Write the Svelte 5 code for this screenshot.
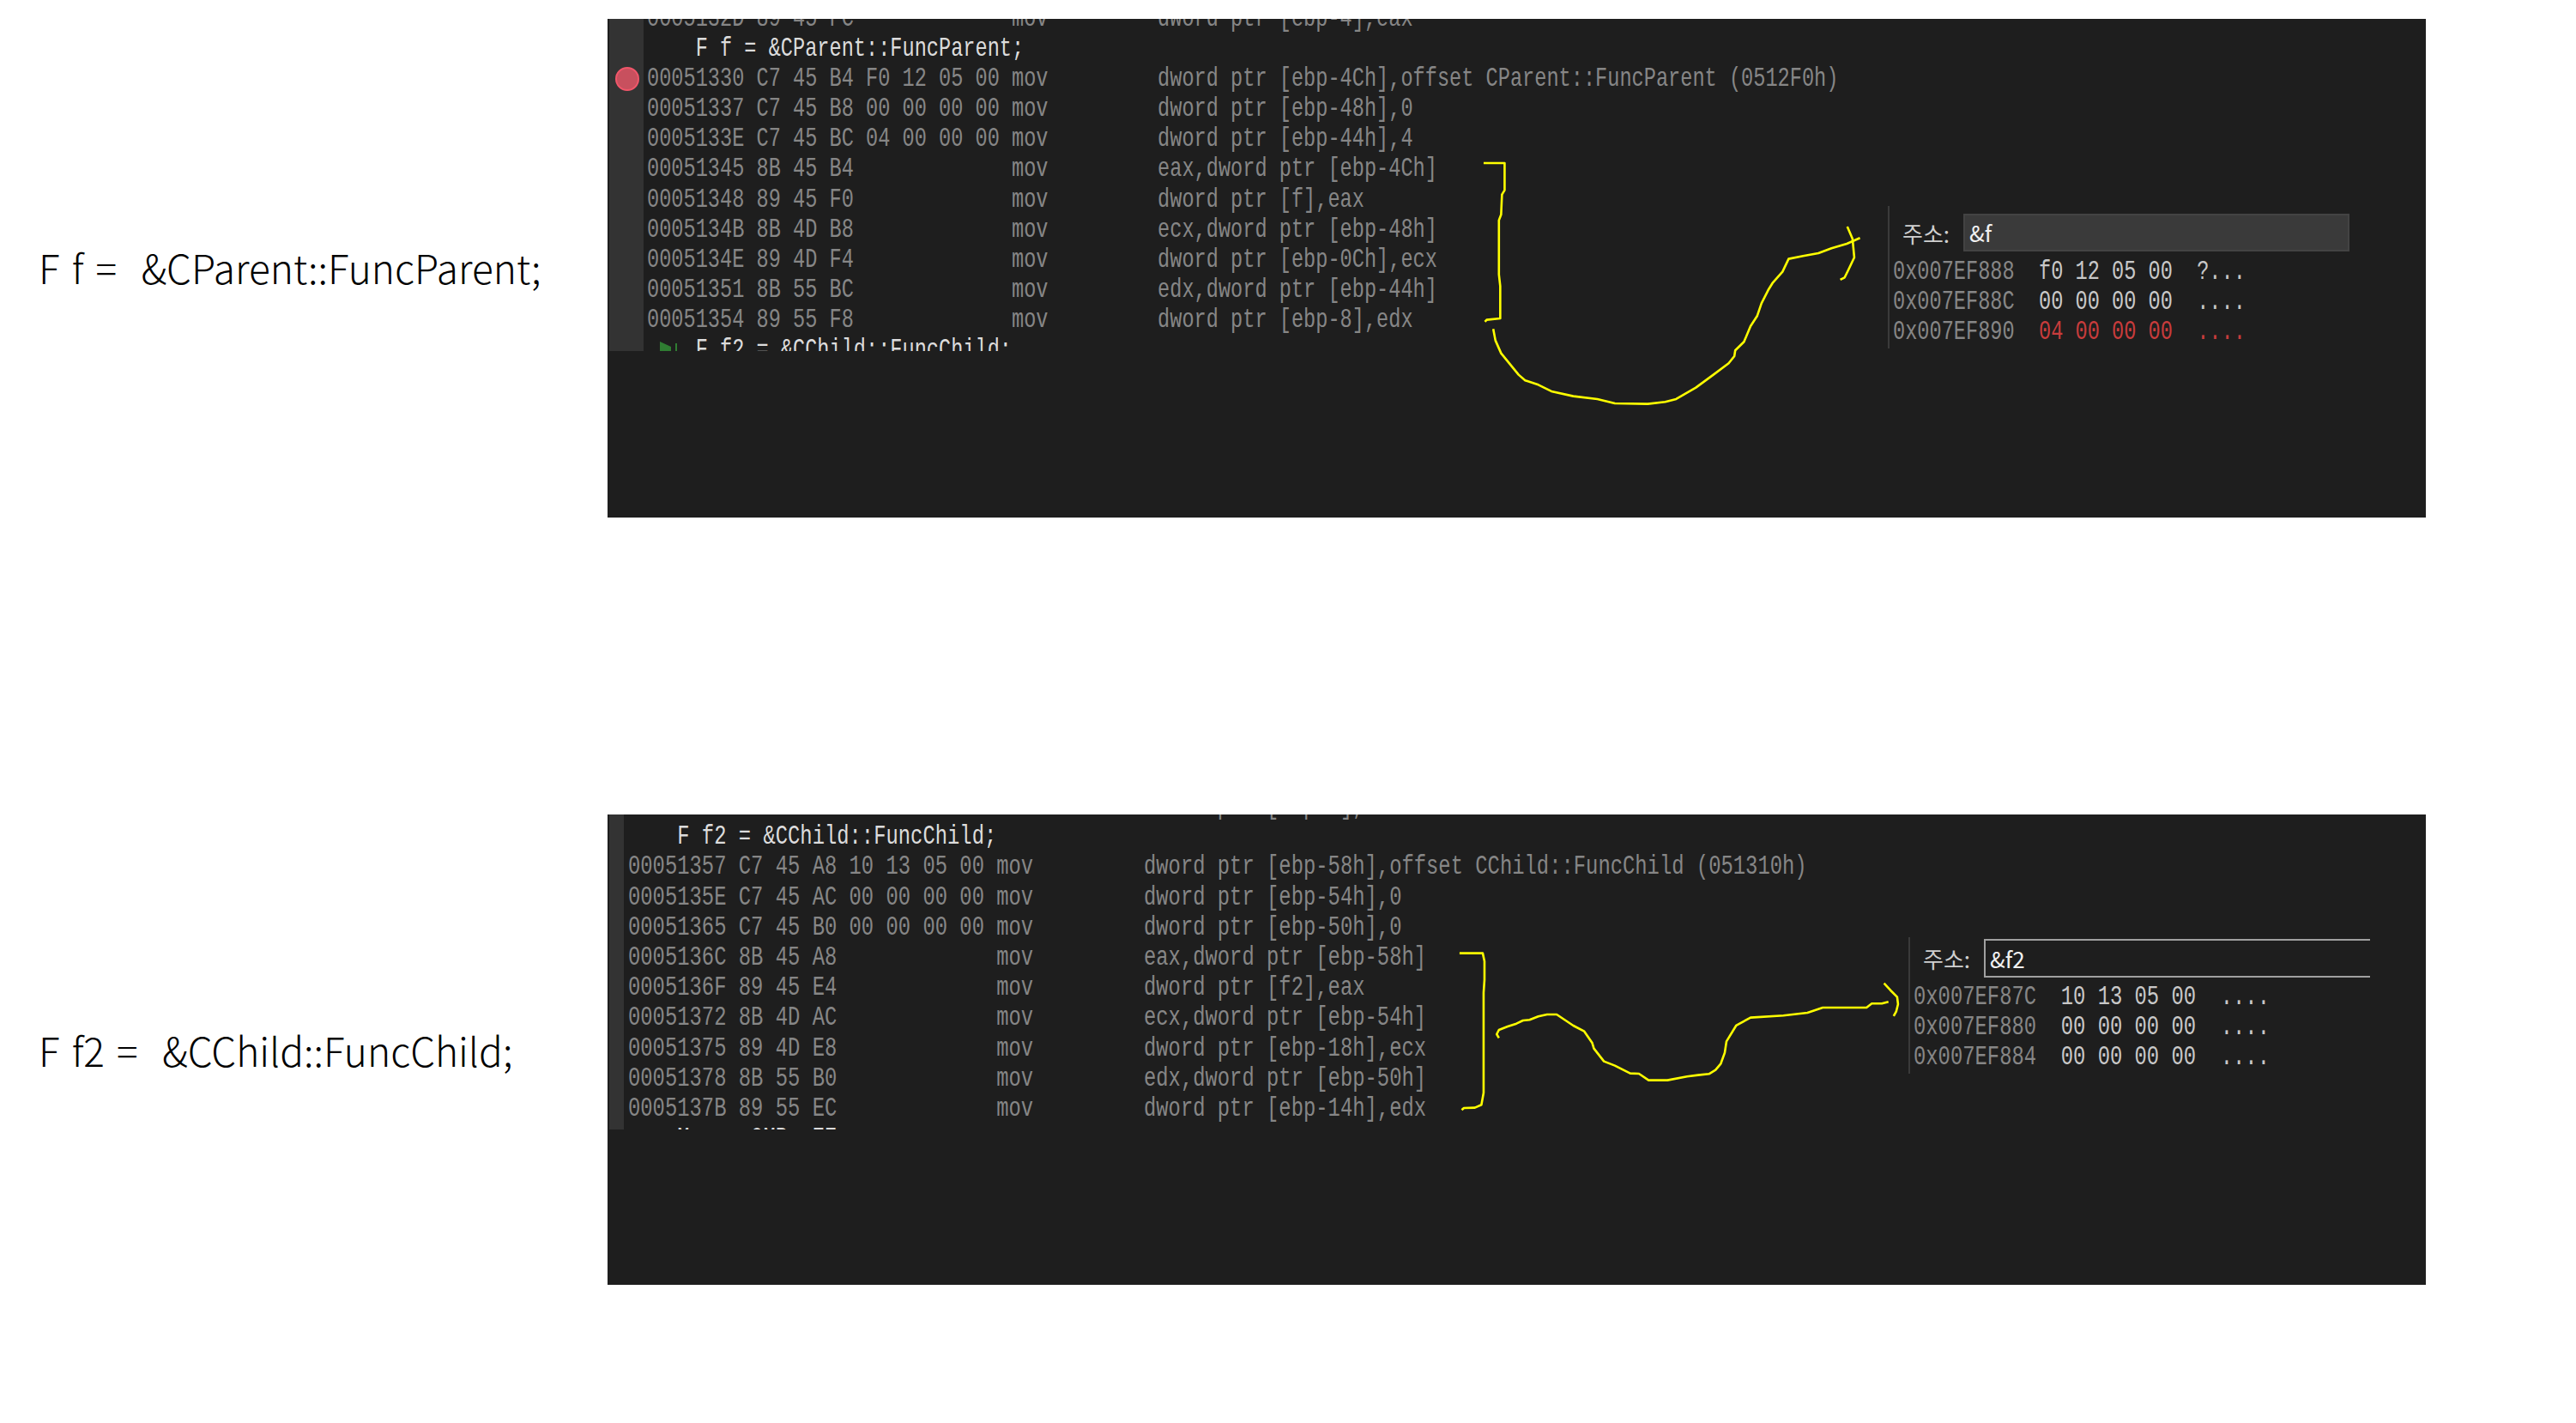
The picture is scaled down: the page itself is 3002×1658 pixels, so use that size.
<script>
  const firstRows = [
    { text: '0005132D 89 45 FC             mov         dword ptr [ebp-4],eax' },
    { text: '    F f = &CParent::FuncParent;', code: true },
    { text: '00051330 C7 45 B4 F0 12 05 00 mov         dword ptr [ebp-4Ch],offset CParent::FuncParent (0512F0h)' },
    { text: '00051337 C7 45 B8 00 00 00 00 mov         dword ptr [ebp-48h],0' },
    { text: '0005133E C7 45 BC 04 00 00 00 mov         dword ptr [ebp-44h],4' },
    { text: '00051345 8B 45 B4             mov         eax,dword ptr [ebp-4Ch]' },
    { text: '00051348 89 45 F0             mov         dword ptr [f],eax' },
    { text: '0005134B 8B 4D B8             mov         ecx,dword ptr [ebp-48h]' },
    { text: '0005134E 89 4D F4             mov         dword ptr [ebp-0Ch],ecx' },
    { text: '00051351 8B 55 BC             mov         edx,dword ptr [ebp-44h]' },
    { text: '00051354 89 55 F8             mov         dword ptr [ebp-8],edx' },
    { text: '    F f2 = &CChild::FuncChild;', code: true },
  ];

  const secondRows = [
    { text: '00051354 89 55 F8             mov         dword ptr [ebp-8],edx' },
    { text: '    F f2 = &CChild::FuncChild;', code: true },
    { text: '00051357 C7 45 A8 10 13 05 00 mov         dword ptr [ebp-58h],offset CChild::FuncChild (051310h)' },
    { text: '0005135E C7 45 AC 00 00 00 00 mov         dword ptr [ebp-54h],0' },
    { text: '00051365 C7 45 B0 00 00 00 00 mov         dword ptr [ebp-50h],0' },
    { text: '0005136C 8B 45 A8             mov         eax,dword ptr [ebp-58h]' },
    { text: '0005136F 89 45 E4             mov         dword ptr [f2],eax' },
    { text: '00051372 8B 4D AC             mov         ecx,dword ptr [ebp-54h]' },
    { text: '00051375 89 4D E8             mov         dword ptr [ebp-18h],ecx' },
    { text: '00051378 8B 55 B0             mov         edx,dword ptr [ebp-50h]' },
    { text: '0005137B 89 55 EC             mov         dword ptr [ebp-14h],edx' },
    { text: '    M     0MB  EE', code: true },
  ];

  const firstMemory = [
    { addr: '0x007EF888', bytes: 'f0 12 05 00', ascii: '?...' },
    { addr: '0x007EF88C', bytes: '00 00 00 00', ascii: '....' },
    { addr: '0x007EF890', bytes: '04 00 00 00', ascii: '....', changed: true },
  ];

  const secondMemory = [
    { addr: '0x007EF87C', bytes: '10 13 05 00', ascii: '....' },
    { addr: '0x007EF880', bytes: '00 00 00 00', ascii: '....' },
    { addr: '0x007EF884', bytes: '00 00 00 00', ascii: '....' },
  ];

  // pen strokes, read off the picture: x in 0.51px units, y in 1/3px units
  const firstPen = [
    '645,570 693,570 693,665 687,680 685,750 680,770 680,960 683,1000 683,1113 652,1118 648,1125',
    '667,1150 672,1190 685,1235 725,1310 740,1330 770,1345 800,1368 850,1385 905,1395 945,1410 1020,1412 1060,1405 1085,1395 1130,1355 1170,1310 1205,1270 1218,1245 1220,1225 1240,1195 1255,1140 1270,1105 1280,1060 1295,1015 1305,990 1328,950 1342,905 1375,895 1410,885 1440,868 1475,852 1505,832',
    '1476,792 1488,835 1492,900 1478,945 1470,970 1460,978',
  ];

  const secondPen = [
    '590,482 643,482 647,510 647,575 645,620 645,970 640,1012 625,1022 600,1023 595,1030',
    '680,778 675,765 680,750 700,738 720,728 735,717 750,715 770,703 790,696 812,696 850,735 875,755 893,795 897,815 920,860 945,875 980,902 1000,903 1022,926 1065,926 1110,913 1135,908 1160,904 1175,890 1187,868 1196,830 1200,790 1222,735 1255,707 1330,700 1385,690 1420,672 1520,672 1532,658 1555,658 1570,652',
    '1560,587 1575,612 1590,635 1592,660 1588,685 1582,702',
  ];
</script>

<main class="page">
  <section class="slide first">
    <p class="label">F f = &nbsp;&amp;CParent::FuncParent;</p>
    <div class="panel">
      <div class="disasm">
        <div class="gutter"></div>
        <div class="lines">
          {#each firstRows as row}
            <div class="line" class:code={row.code}>{row.text}</div>
          {/each}
        </div>
        <span class="breakpoint"></span>
        <svg class="step" viewBox="0 0 20 11" width="20" height="11">
          <path d="M0 0 L13 6 L13 11 L0 11 Z" fill="#2f7d32" />
          <rect x="18" y="2" width="2" height="9" fill="#2f7d32" />
        </svg>
      </div>
      <div class="memory">
        <div class="address">
          <span class="caption">주소:</span>
          <span class="field">&amp;f</span>
        </div>
        {#each firstMemory as row}
          <div class="mem-row" class:changed={row.changed}>
            <span class="addr">{row.addr}</span>{'  '}{row.bytes}{'  '}{row.ascii}
          </div>
        {/each}
      </div>
      <svg class="pen" viewBox="0 0 2119 581">
        <g transform="translate(692 -22) scale(0.51 0.3333)">
          {#each firstPen as points}
            <polyline {points} />
          {/each}
        </g>
      </svg>
    </div>
  </section>

  <section class="slide second">
    <p class="label">F f2 = &nbsp;&amp;CChild::FuncChild;</p>
    <div class="panel">
      <div class="disasm">
        <div class="gutter"></div>
        <div class="lines">
          {#each secondRows as row}
            <div class="line" class:code={row.code}>{row.text}</div>
          {/each}
        </div>
      </div>
      <div class="memory">
        <div class="address">
          <span class="caption">주소:</span>
          <span class="field">&amp;f2</span>
        </div>
        {#each secondMemory as row}
          <div class="mem-row">
            <span class="addr">{row.addr}</span>{'  '}{row.bytes}{'  '}{row.ascii}
          </div>
        {/each}
      </div>
      <svg class="pen" viewBox="0 0 2119 548">
        <g transform="translate(692 1) scale(0.51 0.3333)">
          {#each secondPen as points}
            <polyline {points} />
          {/each}
        </g>
      </svg>
    </div>
  </section>
</main>

<style>
  :global(body) {
    margin: 0;
    background: #fff;
  }

  .page {
    width: 3002px;
    height: 1658px;
    padding-top: 22px;
    box-sizing: border-box;
    display: flex;
    flex-direction: column;
    gap: 346px;
    overflow: hidden;
  }

  .slide {
    display: grid;
    grid-template-columns: 708px 2119px;
    align-items: center;
  }

  .first .panel { height: 581px; }
  .second .panel { height: 548px; }

  .label {
    margin: 0 0 4px;
    padding-left: 45px;
    font-family: "Noto Sans CJK KR", "Noto Sans", sans-serif;
    font-weight: 300;
    font-size: 46px;
    word-spacing: 4px;
    color: #000;
    white-space: nowrap;
  }

  .second .label {
    margin: 0;
  }

  .panel {
    position: relative;
    display: flex;
    background: #1e1e1e;
    --font: 23.62px;
    --row: 35.1px;
  }

  .second .panel {
    --font: 23.85px;
    --row: 35.2px;
  }

  .disasm {
    position: relative;
    display: flex;
    height: 387px;
    overflow: hidden;
    margin-left: 2px;
    width: 1490px;
  }

  .second .disasm {
    height: 367px;
    width: 1514px;
  }

  .gutter {
    flex: none;
    width: 40px;
    background: #333;
  }

  .second .gutter {
    width: 17px;
  }

  .lines {
    margin: -18px 0 0 4px;
  }

  .second .lines {
    margin: -27px 0 0 5px;
  }

  .line,
  .mem-row {
    height: var(--row);
    line-height: var(--row);
    white-space: pre;
    font-family: "Liberation Mono", monospace;
    font-size: var(--font);
    color: #868686;
    transform: scaleY(1.3);
  }

  .line.code {
    color: #dcdcdc;
  }

  .breakpoint {
    position: absolute;
    left: 7px;
    top: 56px;
    width: 28px;
    height: 28px;
    box-sizing: border-box;
    border-radius: 50%;
    background: #c8505e;
    border: 2px solid #f0566a;
  }

  .step {
    position: absolute;
    left: 59px;
    top: 376px;
  }

  .memory {
    flex: none;
    height: 166px;
    margin-top: 218px;
    padding-left: 4px;
    border-left: 2px solid #3a3a3a;
    width: 560px;
    box-sizing: border-box;
  }

  .second .memory {
    height: 159px;
    margin-top: 143px;
  }

  .address {
    display: flex;
    align-items: center;
    height: 44px;
    margin: 9px 0 6px;
  }

  .second .address {
    height: 45px;
    margin: 2px 0 5px;
  }

  .caption {
    width: 82px;
    padding-left: 11px;
    box-sizing: border-box;
    font-family: "Noto Sans CJK KR", sans-serif;
    font-size: 26px;
    color: #d0d0d0;
    white-space: nowrap;
  }

  .field {
    width: 450px;
    height: 44px;
    line-height: 40px;
    box-sizing: border-box;
    padding-left: 5px;
    background: #3a3a3a;
    border: 2px solid #434343;
    font-family: "Noto Sans CJK KR", sans-serif;
    font-size: 26px;
    color: #f0f0f0;
  }

  .second .field {
    background: #1e1e1e;
    border: solid #a0a0a0;
    border-width: 2px 0 2px 2px;
    height: 45px;
    line-height: 41px;
  }

  .mem-row {
    color: #c8c8c8;
  }

  .mem-row .addr {
    color: #868686;
  }

  .mem-row.changed {
    color: #c83c3c;
  }

  .pen {
    position: absolute;
    inset: 0;
    width: 100%;
    height: 100%;
    pointer-events: none;
  }

  .pen polyline {
    fill: none;
    stroke: #ffff00;
    stroke-width: 2.6px;
    vector-effect: non-scaling-stroke;
    stroke-linejoin: round;
  }
</style>
